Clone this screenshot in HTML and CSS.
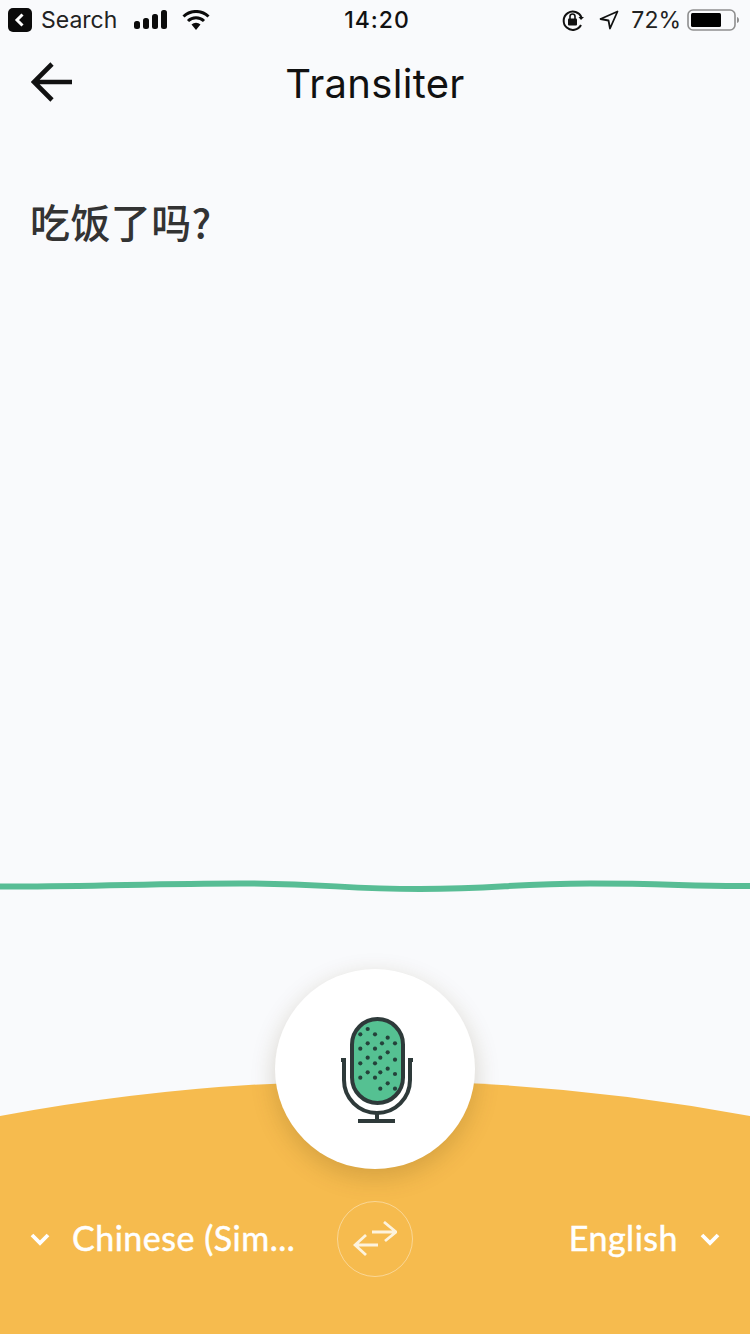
FILE: index.html
```html
<!DOCTYPE html>
<html lang="en">
<head>
    <meta charset="UTF-8">
    <title>Transliter</title>
    <link rel="stylesheet" href="styles.css">
</head>
<body>
    <div class="screen">
        <!-- status bar -->
        <div class="status-bar">
            <div class="status-left">
                <span class="back-app">
                    <svg width="24" height="24" viewBox="0 0 24 24"><rect width="24" height="24" rx="5" fill="#0b0b0b"/><path d="M14.5 6.5 9 12l5.5 5.5" fill="none" stroke="#fff" stroke-width="3"/></svg>
                </span>
                <span class="status-text">Search</span>
                <svg class="signal" width="34" height="20" viewBox="0 0 34 20"><rect x="0" y="11" width="6" height="8" rx="2.5"/><rect x="9" y="8" width="6" height="11" rx="2.5"/><rect x="18" y="4" width="6" height="15" rx="2.5"/><rect x="27" y="0" width="6" height="19" rx="2.5"/></svg>
                <svg class="wifi" width="28" height="20" viewBox="0 0 28 20"><path d="M1.5 6.5a18 18 0 0 1 25 0" fill="none" stroke="#0b0b0b" stroke-width="3"/><path d="M6 11a11.500 11.500 0 0 1 16 0" fill="none" stroke="#0b0b0b" stroke-width="3"/><path d="M9.500 14.500a6.500 6.500 0 0 1 9 0L14 20z" fill="#0b0b0b"/></svg>
            </div>
            <div class="status-time">14:20</div>
            <div class="status-right">
                <svg width="24" height="24" viewBox="0 0 24 24"><path d="M20.500 9.500A9.200 9.200 0 1 0 20 17" fill="none" stroke="#111" stroke-width="2"/><path d="m23 9-3 3-2.500-3z" fill="#111"/><rect x="7" y="10.500" width="9" height="7" rx="1" fill="#111"/><path d="M9 11V8.500a2.500 2.500 0 0 1 5 0V11" fill="none" stroke="#111" stroke-width="1.600"/></svg>
                <svg class="location" width="20" height="20" viewBox="0 0 20 20"><path d="M18.500 1.500 1.500 9l8 1.500 1.500 8z" fill="none" stroke="#111" stroke-width="1.800" stroke-linejoin="round"/></svg>
                <span class="status-text battery-text">72%</span>
                <svg width="52" height="24" viewBox="0 0 52 24"><rect x="1" y="2" width="47" height="20" rx="5" fill="none" stroke="#8e8e8e" stroke-width="1.600"/><rect x="4" y="5" width="30" height="14" rx="1.500" fill="#000"/><path d="M50 9c1.500.5 2 1.500 2 3s-.5 2.500-2 3z" fill="#8e8e8e"/></svg>
            </div>
        </div>

        <!-- header -->
        <div class="header">
            <svg class="back-arrow" width="42" height="40" viewBox="0 0 42 40"><path d="M21 2 3 20l18 18M3 20h38" fill="none" stroke="#111" stroke-width="4.600"/></svg>
            <h1>Transliter</h1>
        </div>

        <div class="source-text">吃饭了吗?</div>

        <svg class="wave" width="750" height="14" viewBox="0 0 750 14"><path d="M0 7.500C90 8 150 4.500 240 4.500S340 10 420 10 510 4.500 590 4.500 690 7.500 750 7" fill="none" stroke="#58bd95" stroke-width="6"/></svg>

        <!-- bottom panel -->
        <div class="footer">
            <svg class="curve" width="750" height="258" viewBox="0 0 750 258"><path d="M0 40Q375 -30 750 40V258H0z" fill="#f6bb4e"/></svg>
            <div class="mic-button">
                <svg width="72" height="106" viewBox="0 0 72 106">
                    <rect x="11" y="2" width="51" height="84" rx="25.500" fill="#55c192" stroke="#2e3a3a" stroke-width="4"/>
                    <path d="M0 43h3v20a33 33 0 0 0 66 0V43h3" fill="none" stroke="#2e3a3a" stroke-width="4"/>
                    <path d="M36 96v8M17 104h37" fill="none" stroke="#2e3a3a" stroke-width="4"/>
                    <g fill="#24423a">
                        <circle cx="26.700" cy="12" r="2.100"/><circle cx="19.300" cy="17.300" r="2.100"/><circle cx="34" cy="17.300" r="2.100"/><circle cx="46.700" cy="20.700" r="2.100"/><circle cx="26.700" cy="26.300" r="2.100"/><circle cx="41" cy="26.300" r="2.100"/><circle cx="54" cy="26.300" r="2.100"/><circle cx="19.300" cy="31.700" r="2.100"/><circle cx="34" cy="31.700" r="2.100"/><circle cx="46.700" cy="35.300" r="2.100"/><circle cx="26.700" cy="40.700" r="2.100"/><circle cx="39.300" cy="40.700" r="2.100"/><circle cx="54" cy="42.700" r="2.100"/><circle cx="19.300" cy="46.300" r="2.100"/><circle cx="34" cy="46.300" r="2.100"/><circle cx="46.700" cy="51.700" r="2.100"/><circle cx="26.700" cy="55.300" r="2.100"/><circle cx="39.300" cy="55.300" r="2.100"/><circle cx="54" cy="57" r="2.100"/><circle cx="19.300" cy="60.700" r="2.100"/><circle cx="34" cy="60.700" r="2.100"/><circle cx="46.700" cy="66.300" r="2.100"/><circle cx="39.300" cy="71.700" r="2.100"/><circle cx="54" cy="71.700" r="2.100"/>
                    </g>
                </svg>
            </div>
            <div class="lang-row">
                <div class="lang lang-from">
                    <svg class="chevron" width="20" height="14" viewBox="0 0 20 14"><path d="m2 3 8 8 8-8" fill="none" stroke="#fff" stroke-width="3.800"/></svg>
                    <span class="lang-name">Chinese (Sim...</span>
                </div>
                <div class="swap">
                    <svg width="44" height="36" viewBox="0 0 44 36"><path d="M19 11h24M31 1l12 10-11 9" fill="none" stroke="#fdf3dd" stroke-width="2.800"/><path d="M25 24H3M13 14 2 24l11 10" fill="none" stroke="#fdf3dd" stroke-width="2.800"/></svg>
                </div>
                <div class="lang lang-to">
                    <span class="lang-name">English</span>
                    <svg class="chevron" width="20" height="14" viewBox="0 0 20 14"><path d="m2 3 8 8 8-8" fill="none" stroke="#fff" stroke-width="3.800"/></svg>
                </div>
            </div>
        </div>
    </div>
</body>
</html>
```

FILE: styles.css
```css
html, body {
    margin: 0;
    padding: 0;
}
body {
    font-family: Inter, "Noto Sans CJK SC", sans-serif;
    background-color: #f9fafc;
}
.screen {
    width: 750px;
    height: 1334px;
    display: flex;
    flex-direction: column;
    overflow: hidden;
    background-color: #f9fafc;
}
.status-bar {
    flex-shrink: 0;
    height: 40px;
    padding: 0 11px 0 8px;
    display: grid;
    grid-template-columns: 1fr auto 1fr;
    align-items: center;
    color: #111;
}
.status-left, .status-right {
    display: flex;
    align-items: center;
}
.status-right {
    justify-content: flex-end;
}
.back-app {
    display: flex;
    margin-right: 9px;
}
.status-text {
    font-size: 23px;
    color: #222;
}
.signal {
    margin-left: 17px;
    fill: #0b0b0b;
}
.wifi {
    margin-left: 14px;
}
.status-time {
    margin-left: 7px;
    font-size: 23px;
    font-weight: 500;
    letter-spacing: 1px;
}
.location {
    margin-left: 14px;
}
.battery-text {
    margin-left: 12px;
    margin-right: 6px;
}
.header {
    flex-shrink: 0;
    height: 84px;
    position: relative;
    display: flex;
    align-items: center;
    justify-content: center;
}
.back-arrow {
    position: absolute;
    left: 31px;
    top: 22px;
}
h1 {
    margin: 0;
    padding-top: 2px;
    font-size: 40px;
    font-weight: 400;
    letter-spacing: 0.3px;
    color: #111;
}
.source-text {
    flex-shrink: 0;
    box-sizing: border-box;
    height: 755px;
    padding: 49px 0 0 30px;
    font-family: "Noto Sans CJK SC", sans-serif;
    font-size: 40px;
    font-weight: 500;
    letter-spacing: 0.4px;
    line-height: 96px;
    color: #333;
}
.wave {
    display: block;
    flex-shrink: 0;
}
.footer {
    position: relative;
    flex: 1;
    margin-top: 183px;
    display: flex;
    flex-direction: column;
}
.curve {
    position: absolute;
    left: 0;
    top: 0;
}
.mic-button {
    position: absolute;
    left: 275px;
    top: -107px;
    width: 200px;
    height: 200px;
    box-sizing: border-box;
    padding: 2px 0 0 4px;
    border-radius: 50%;
    background-color: #fff;
    box-shadow: 0 8px 24px rgba(90, 70, 20, 0.22);
    display: flex;
    align-items: center;
    justify-content: center;
}
.lang-row {
    position: relative;
    margin-top: 125px;
    height: 76px;
    padding: 0 30px;
    display: grid;
    grid-template-columns: 1fr 76px 1fr;
    align-items: center;
}
.lang {
    display: flex;
    align-items: center;
    color: #fff;
}
.lang-to {
    justify-content: flex-end;
}
.lang-name {
    padding-bottom: 3px;
    font-family: Lato, sans-serif;
    font-size: 34px;
    letter-spacing: 0.5px;
    -webkit-text-stroke: 0.5px #fff;
}
.lang-from .lang-name {
    margin-left: 22px;
}
.lang-to .lang-name {
    margin-right: 22px;
}
.swap {
    width: 76px;
    height: 76px;
    box-sizing: border-box;
    border-radius: 50%;
    border: 1px solid rgba(255, 255, 255, 0.4);
    display: flex;
    align-items: center;
    justify-content: center;
}
```
